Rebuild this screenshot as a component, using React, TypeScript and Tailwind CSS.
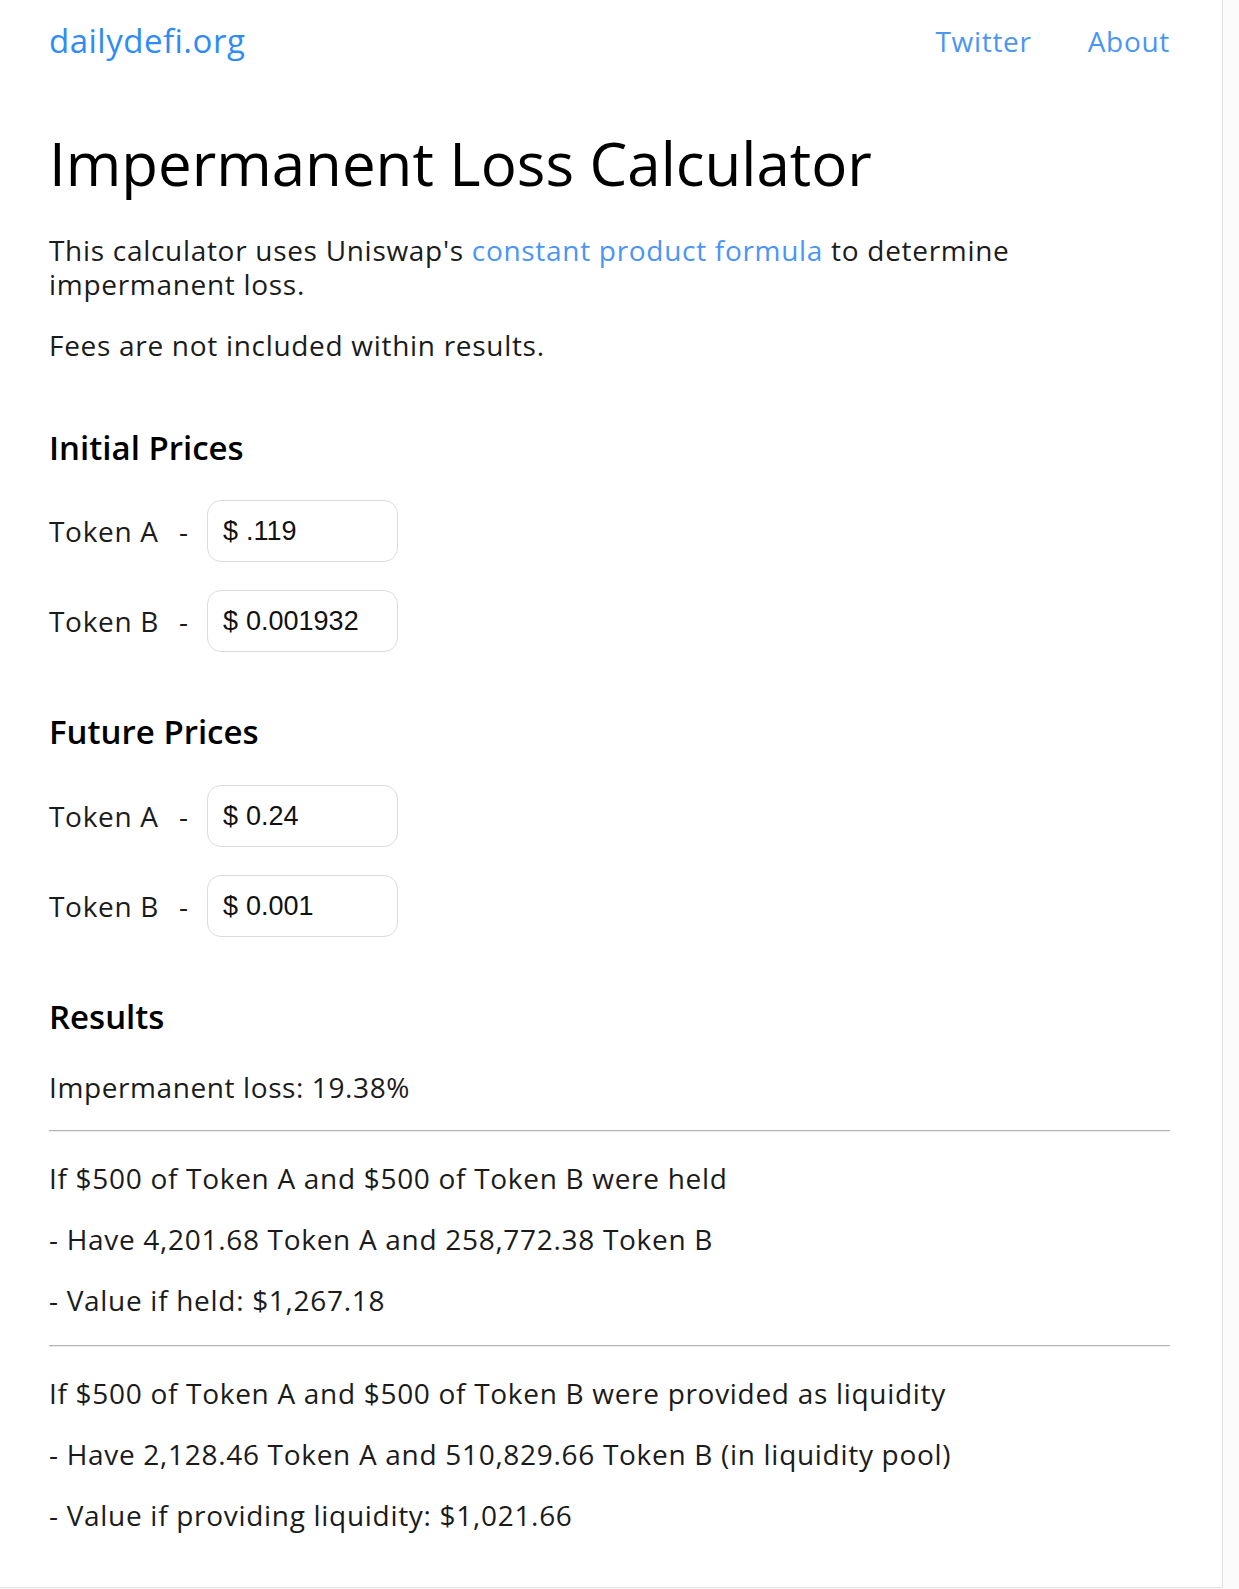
import React from "react";

const font = { fontFamily: '"Open Sans", "Noto Sans", sans-serif' };
const mono = { fontFamily: '"Liberation Sans", Arial, sans-serif' };

function PriceRow({ label, value }: { label: string; value: string }) {
  return (
    <div className="flex items-center h-[62px]">
      <div className="w-[158px] flex items-center text-[28px] tracking-[0.7px] text-[#1b1b1b]">
        <span className="w-[130px]">{label}</span>
        <span>-</span>
      </div>
      <div className="w-[191px] h-[62px] border border-[#dcdcdc] rounded-[14px] flex items-center px-[15px]" style={mono}>
        <span className="text-[27px] text-[#111]">$</span>
        <input
          readOnly
          value={value}
          className="ml-[8px] w-[132px] text-[27px] text-[#111] outline-none bg-transparent"
          style={mono}
        />
      </div>
    </div>
  );
}

export default function App() {
  return (
    <div className="w-full h-screen overflow-hidden flex bg-[#fbfbfb]" style={font}>
      <div className="w-[1223px] h-[1588px] bg-white border-r border-b border-[#e0e0e0] shrink-0">
        <header className="h-[82px] flex items-center justify-between pl-[49px] pr-[52px]">
          <a className="text-[33px] font-medium text-[#2f8cf6] tracking-[0.5px]">dailydefi.org</a>
          <nav className="flex items-center gap-[56px] text-[28px] tracking-[0.7px] text-[#4a95f5]">
            <a>Twitter</a>
            <a>About</a>
          </nav>
        </header>
        <main className="pl-[49px] pr-[52px]">
          <h1 className="mt-[43px] text-[60px] leading-[76px] font-medium text-black">Impermanent Loss Calculator</h1>
          <p className="mt-[32px] text-[28px] leading-[34px] tracking-[0.7px] text-[#1b1b1b] w-[1000px]">
            This calculator uses Uniswap's <a className="text-[#4a95f5]">constant product formula</a> to determine impermanent loss.
          </p>
          <p className="mt-[27px] text-[28px] leading-[34px] tracking-[0.7px] text-[#1b1b1b]">Fees are not included within results.</p>

          <h2 className="mt-[65px] text-[33px] leading-[42px] font-semibold text-black">Initial Prices</h2>
          <div className="mt-[31px] flex flex-col gap-[28px]">
            <PriceRow label="Token A" value=".119" />
            <PriceRow label="Token B" value="0.001932" />
          </div>

          <h2 className="mt-[59px] text-[33px] leading-[42px] font-semibold text-black">Future Prices</h2>
          <div className="mt-[32px] flex flex-col gap-[28px]">
            <PriceRow label="Token A" value="0.24" />
            <PriceRow label="Token B" value="0.001" />
          </div>

          <h2 className="mt-[59px] text-[33px] leading-[42px] font-semibold text-black">Results</h2>
          <p className="mt-[32px] text-[28px] leading-[34px] tracking-[0.6px] text-[#1b1b1b]">Impermanent loss: 19.38%</p>
          <hr className="mt-[26px] border-0 border-t border-b border-t-[#b5b5b5] border-b-[#ececec]" />
          <div className="flex flex-col gap-[27px] mt-[29px] text-[28px] leading-[34px] tracking-[0.7px] text-[#1b1b1b]">
            <p>If $500 of Token A and $500 of Token B were held</p>
            <p>- Have 4,201.68 Token A and 258,772.38 Token B</p>
            <p>- Value if held: $1,267.18</p>
          </div>
          <hr className="mt-[28px] border-0 border-t border-b border-t-[#b5b5b5] border-b-[#ececec]" />
          <div className="flex flex-col gap-[27px] mt-[29px] text-[28px] leading-[34px] tracking-[0.7px] text-[#1b1b1b]">
            <p>If $500 of Token A and $500 of Token B were provided as liquidity</p>
            <p>- Have 2,128.46 Token A and 510,829.66 Token B (in liquidity pool)</p>
            <p>- Value if providing liquidity: $1,021.66</p>
          </div>
        </main>
      </div>
    </div>
  );
}
